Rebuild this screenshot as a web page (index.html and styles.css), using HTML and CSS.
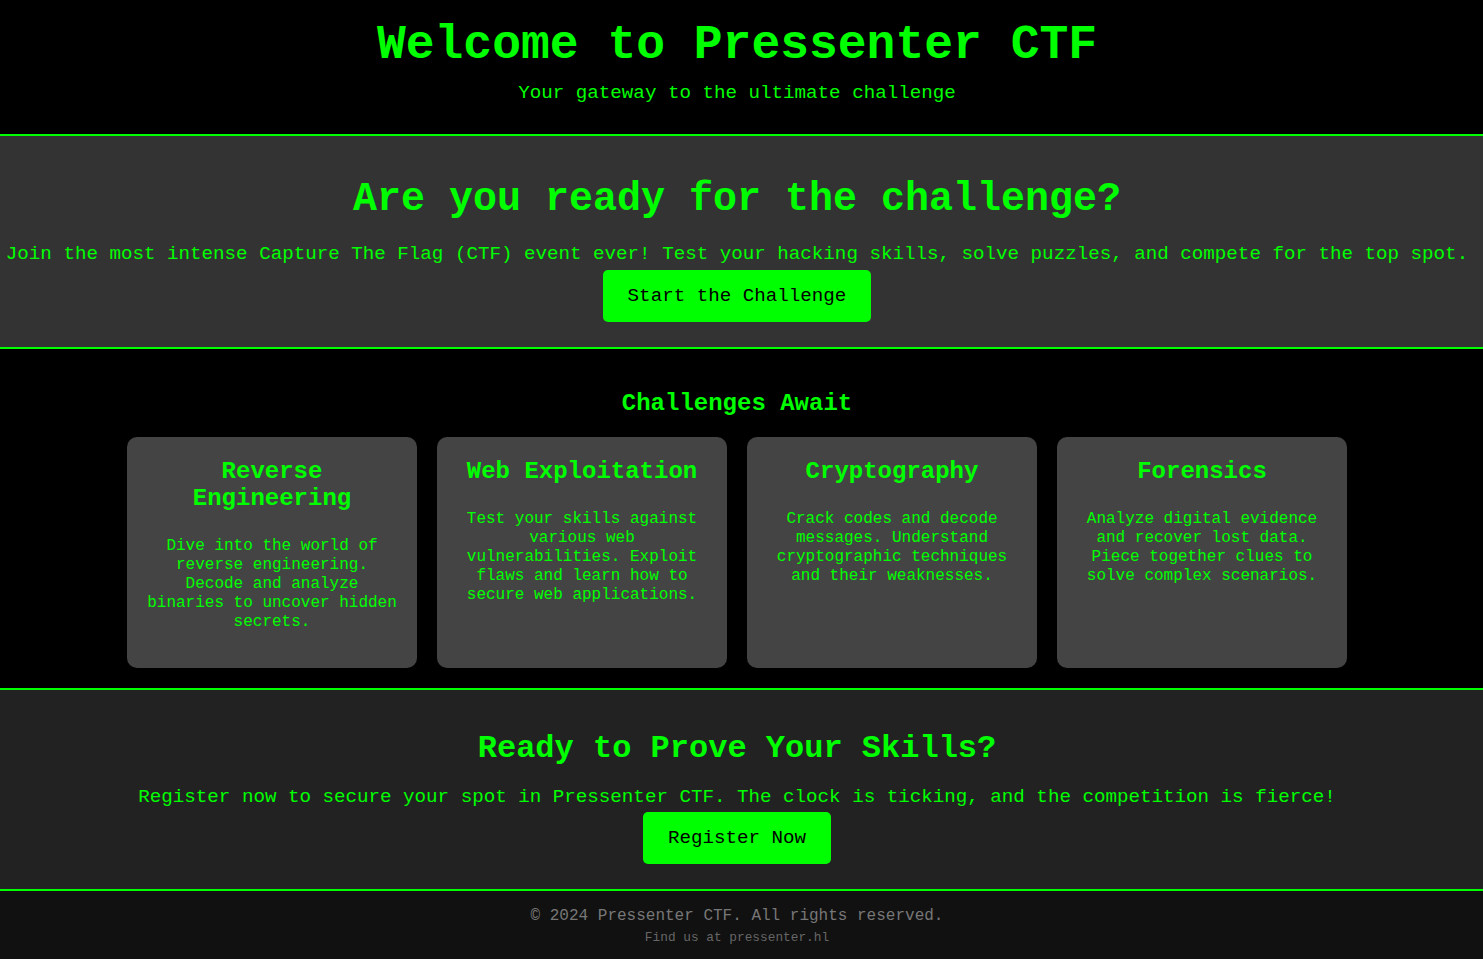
FILE: index.html
```html
<!DOCTYPE html>
<html lang="en">
<head>
<meta charset="UTF-8">
<title>Pressenter CTF</title>
<link rel="stylesheet" href="styles.css">
</head>
<body>
<header class="site-header">
  <h1 class="site-title">Welcome to Pressenter CTF</h1>
  <p class="site-tagline">Your gateway to the ultimate challenge</p>
</header>

<section class="hero">
  <h2 class="hero-title">Are you ready for the challenge?</h2>
  <p class="hero-text">Join the most intense Capture The Flag (CTF) event ever! Test your hacking skills, solve puzzles, and compete for the top spot.</p>
  <div class="btn-row"><a class="btn" href="#">Start the Challenge</a></div>
</section>

<section class="challenges">
  <h2 class="challenges-title">Challenges Await</h2>
  <div class="card-row">
    <div class="card">
      <h3 class="card-title">Reverse Engineering</h3>
      <p class="card-text">Dive into the world of reverse engineering. Decode and analyze binaries to uncover hidden secrets.</p>
    </div>
    <div class="card">
      <h3 class="card-title">Web Exploitation</h3>
      <p class="card-text">Test your skills against various web vulnerabilities. Exploit flaws and learn how to secure web applications.</p>
    </div>
    <div class="card">
      <h3 class="card-title">Cryptography</h3>
      <p class="card-text">Crack codes and decode messages. Understand cryptographic techniques and their weaknesses.</p>
    </div>
    <div class="card">
      <h3 class="card-title">Forensics</h3>
      <p class="card-text">Analyze digital evidence and recover lost data. Piece together clues to solve complex scenarios.</p>
    </div>
  </div>
</section>

<section class="cta">
  <h2 class="cta-title">Ready to Prove Your Skills?</h2>
  <p class="cta-text">Register now to secure your spot in Pressenter CTF. The clock is ticking, and the competition is fierce!</p>
  <div class="btn-row"><a class="btn" href="#">Register Now</a></div>
</section>

<footer class="site-footer">
  <p class="footer-copy">&copy; 2024 Pressenter CTF. All rights reserved.</p>
  <p class="footer-find">Find us at pressenter.hl</p>
</footer>
</body>
</html>
```

FILE: styles.css
```css
* {
  box-sizing: border-box;
}

html, body {
  margin: 0;
  padding: 0;
  background: #000;
}

body {
  font-family: "Liberation Mono", "Courier New", monospace;
  color: #00ff00;
  font-size: 16px;
  text-align: center;
}

/* Header */
.site-header {
  padding: 18px 9px 30px 0;
  border-bottom: 2px solid #00ff00;
  background: #000;
}

.site-title {
  font-size: 48px;
  font-weight: bold;
  margin: 0;
}

.site-tagline {
  font-size: 19.2px;
  margin: 10px 0 0;
}

/* Hero */
.hero {
  background: #333;
  padding: 41px 9px 25px 0;
  border-bottom: 2px solid #00ff00;
}

.hero-title {
  font-size: 40px;
  margin: 0 0 21px;
}

.hero-text {
  font-size: 19.2px;
  margin: 0 0 5px;
  white-space: nowrap;
}

.btn-row {
  display: flex;
  justify-content: center;
}

.btn {
  display: inline-block;
  background: #00ff00;
  color: #000;
  text-decoration: none;
  font-size: 19.2px;
  padding: 15px 25px;
  border-radius: 5px;
}

/* Challenges */
.challenges {
  background: #000;
  padding: 41px 9px 20px 0;
  border-bottom: 2px solid #00ff00;
}

.challenges-title {
  font-size: 24px;
  margin: 0 0 20px;
}

.card-row {
  display: flex;
  justify-content: center;
  gap: 20px;
}

.card {
  width: 290px;
  background: #444;
  border-radius: 10px;
  padding: 21px 20px 20px;
  display: flex;
  flex-direction: column;
}

.card-title {
  font-size: 24px;
  margin: 0 0 9px;
}

.card-text {
  font-size: 16px;
  line-height: 19px;
  margin: 16px 0;
}

/* CTA */
.cta {
  background: #222;
  padding: 40px 9px 25px 0;
  border-bottom: 2px solid #00ff00;
}

.cta-title {
  font-size: 32px;
  margin: 0 0 19px;
}

.cta-text {
  font-size: 19.2px;
  margin: 0 0 4px;
}

/* Footer */
.site-footer {
  background: #111;
  padding: 16px 9px 14px 0;
}

.footer-copy {
  color: #777;
  font-size: 16px;
  margin: 0;
}

.footer-find {
  color: #666;
  font-size: 12.8px;
  margin: 5px 0 0;
}
```
